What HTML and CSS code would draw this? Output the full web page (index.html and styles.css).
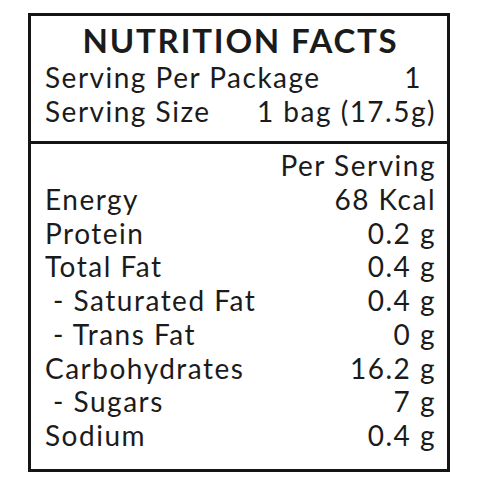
FILE: index.html
```html
<!DOCTYPE html>
<html lang="en">
<head>
    <meta charset="UTF-8">
    <meta name="viewport" content="width=device-width, initial-scale=1.0">
    <title>Nutrition Facts</title>
    <link rel="stylesheet" href="styles.css">
</head>
<body>
    <div class="label">
        <div class="top">
            <h1 class="title">NUTRITION FACTS</h1>
            <div class="row">
                <span>Serving Per Package</span>
                <span class="count">1</span>
            </div>
            <div class="row">
                <span>Serving Size</span>
                <span>1 bag (17.5g)</span>
            </div>
        </div>

        <div class="facts">
            <div class="row per">
                <span>Per Serving</span>
            </div>
            <div class="row"><span>Energy</span><span>68 Kcal</span></div>
            <div class="row"><span>Protein</span><span>0.2 g</span></div>
            <div class="row"><span>Total Fat</span><span>0.4 g</span></div>
            <div class="row sub"><span>- Saturated Fat</span><span>0.4 g</span></div>
            <div class="row sub"><span>- Trans Fat</span><span>0 g</span></div>
            <div class="row"><span>Carbohydrates</span><span>16.2 g</span></div>
            <div class="row sub"><span>- Sugars</span><span>7 g</span></div>
            <div class="row"><span>Sodium</span><span>0.4 g</span></div>
        </div>
    </div>
</body>
</html>
```

FILE: styles.css
```css
body {
    margin: 0;
    padding: 13px 0 0 28px;
    background: #fff;
    font-family: Lato, "Open Sans", sans-serif;
    color: #1b1b1b;
}
.label {
    width: 422px;
    height: 459px;
    box-sizing: border-box;
    border: 3px solid #151515;
}
.top {
    padding: 4px 11px 13px 14px;
    border-bottom: 3px solid #151515;
}
.title {
    margin: 0;
    font-size: 33px;
    line-height: 40px;
    font-weight: 700;
    letter-spacing: 1.8px;
    text-align: center;
}
.row {
    display: flex;
    justify-content: space-between;
    font-size: 28px;
    line-height: 34px;
    letter-spacing: 1.5px;
}
.count {
    padding-right: 14px;
}
.facts {
    padding: 5px 11px 0 14px;
}
.facts .row {
    line-height: 33.75px;
}
.per {
    justify-content: flex-end;
}
.sub span:first-child {
    padding-left: 8px;
}
```
